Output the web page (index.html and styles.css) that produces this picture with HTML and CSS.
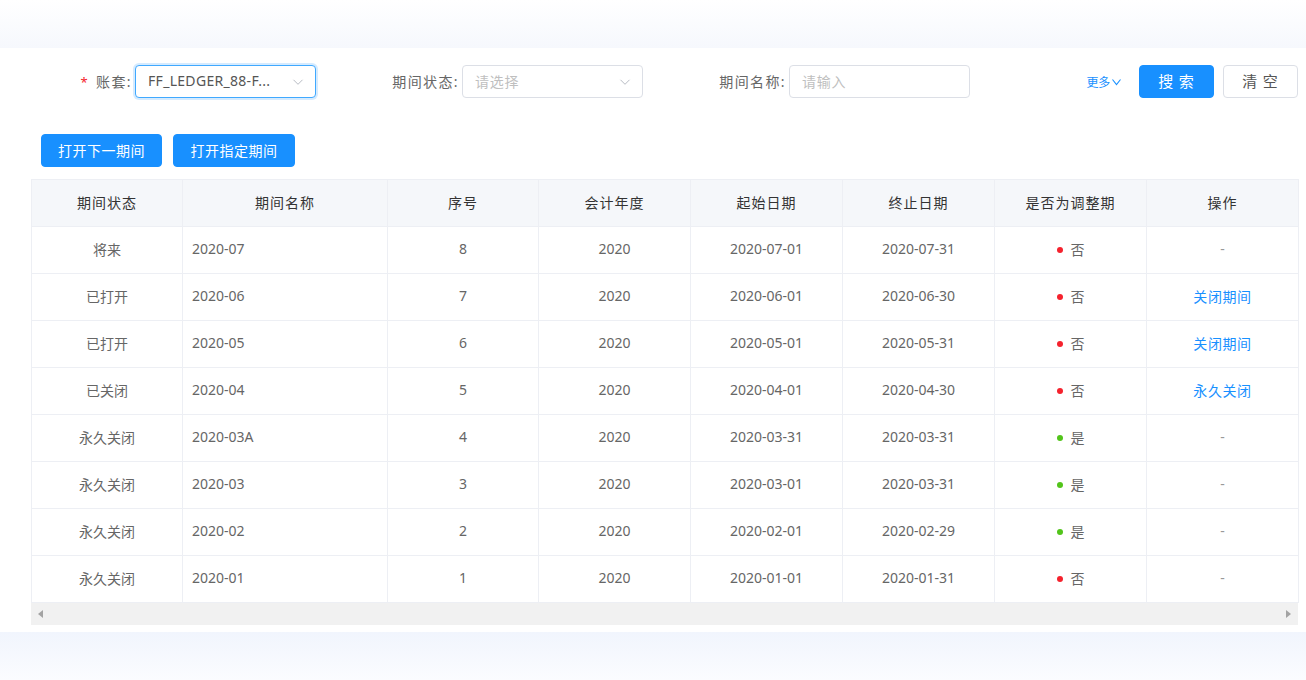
FILE: index.html
```html
<!DOCTYPE html>
<html lang="zh">
<head>
<meta charset="utf-8">
<title>期间管理</title>
<link rel="stylesheet" href="styles.css">
</head>
<body>
<div class="top-band"></div>
<div class="card">
  <div class="filter">
    <div class="item">
      <label class="lbl"><span class="req">*</span>账套:</label>
      <div class="control select focused"><span class="val">FF_LEDGER_88-F...</span>
        <svg class="arrow" viewBox="0 0 12 12"><path d="M1.5 3.8 L6 8.3 L10.5 3.8" fill="none" stroke="#b8bcc4" stroke-width="1"/></svg>
      </div>
    </div>
    <div class="item">
      <label class="lbl">期间状态:</label>
      <div class="control select"><span class="ph">请选择</span>
        <svg class="arrow" viewBox="0 0 12 12"><path d="M1.5 3.8 L6 8.3 L10.5 3.8" fill="none" stroke="#b8bcc4" stroke-width="1"/></svg>
      </div>
    </div>
    <div class="item">
      <label class="lbl">期间名称:</label>
      <div class="control"><span class="ph">请输入</span></div>
    </div>
    <div class="actions">
      <a class="more">更多<svg class="more-ic" viewBox="0 0 10 10"><path d="M1 2.5 L5 7.5 L9 2.5" fill="none" stroke="#1890ff" stroke-width="1.1"/></svg></a>
      <button class="btn primary wide">搜 索</button>
      <button class="btn plain wide">清 空</button>
    </div>
  </div>
  <div class="toolbar">
    <button class="btn primary">打开下一期间</button>
    <button class="btn primary">打开指定期间</button>
  </div>
  <div class="table-wrap">
    <table class="grid">
      <colgroup>
        <col style="width:151px"><col style="width:205px"><col style="width:151px"><col style="width:152px"><col style="width:152px"><col style="width:152px"><col style="width:152px"><col style="width:152px">
      </colgroup>
      <thead>
        <tr><th>期间状态</th><th>期间名称</th><th>序号</th><th>会计年度</th><th>起始日期</th><th>终止日期</th><th>是否为调整期</th><th>操作</th></tr>
      </thead>
      <tbody>
        <tr><td>将来</td><td class="left">2020-07</td><td>8</td><td>2020</td><td>2020-07-01</td><td>2020-07-31</td><td><span class="dot red"></span>否</td><td class="muted">-</td></tr>
        <tr><td>已打开</td><td class="left">2020-06</td><td>7</td><td>2020</td><td>2020-06-01</td><td>2020-06-30</td><td><span class="dot red"></span>否</td><td><a class="link">关闭期间</a></td></tr>
        <tr><td>已打开</td><td class="left">2020-05</td><td>6</td><td>2020</td><td>2020-05-01</td><td>2020-05-31</td><td><span class="dot red"></span>否</td><td><a class="link">关闭期间</a></td></tr>
        <tr><td>已关闭</td><td class="left">2020-04</td><td>5</td><td>2020</td><td>2020-04-01</td><td>2020-04-30</td><td><span class="dot red"></span>否</td><td><a class="link">永久关闭</a></td></tr>
        <tr><td>永久关闭</td><td class="left">2020-03A</td><td>4</td><td>2020</td><td>2020-03-31</td><td>2020-03-31</td><td><span class="dot green"></span>是</td><td class="muted">-</td></tr>
        <tr><td>永久关闭</td><td class="left">2020-03</td><td>3</td><td>2020</td><td>2020-03-01</td><td>2020-03-31</td><td><span class="dot green"></span>是</td><td class="muted">-</td></tr>
        <tr><td>永久关闭</td><td class="left">2020-02</td><td>2</td><td>2020</td><td>2020-02-01</td><td>2020-02-29</td><td><span class="dot green"></span>是</td><td class="muted">-</td></tr>
        <tr><td>永久关闭</td><td class="left">2020-01</td><td>1</td><td>2020</td><td>2020-01-01</td><td>2020-01-31</td><td><span class="dot red"></span>否</td><td class="muted">-</td></tr>
      </tbody>
    </table>
    <div class="hscroll">
      <span class="tri left-tri"></span>
      <span class="tri right-tri"></span>
    </div>
  </div>
</div>
<div class="bottom-band"></div>
</body>
</html>
```
FILE: styles.css
```css
* { box-sizing: border-box; }
html, body { margin: 0; padding: 0; }
body {
  width: 1306px;
  height: 680px;
  overflow: hidden;
  background: #ffffff;
  font-family: "Noto Sans", "Noto Sans CJK SC", sans-serif;
  font-size: 14px;
  color: #666;
}
.top-band {
  height: 48px;
  background: linear-gradient(180deg, #ffffff 0%, #f6f8fd 100%);
}
.bottom-band {
  height: 48px;
  background: linear-gradient(180deg, #f1f5fd 0%, #fbfcff 100%);
}
.card {
  height: 584px;
  background: #fff;
  padding-top: 17px;
}
.filter {
  display: flex;
  align-items: center;
  height: 33px;
  padding-right: 8px;
}
.item {
  display: flex;
  align-items: center;
  width: 327px;
  flex: none;
}
.lbl {
  width: 135px;
  text-align: right;
  padding-right: 3px;
  padding-bottom: 2px;
  color: #666;
  font-size: 14px;
  letter-spacing: 1.4px;
  white-space: nowrap;
}
.req { color: #f5222d; margin-right: 7px; font-size: 13px; }
.control {
  width: 181px;
  height: 33px;
  border: 1px solid #dcdfe6;
  border-radius: 4px;
  display: flex;
  align-items: center;
  padding: 0 12px 2px;
  position: relative;
  background: #fff;
}
.control.focused {
  border-color: #40a9ff;
  box-shadow: 0 0 0 2px rgba(24,144,255,0.18);
}
.val { color: #555; letter-spacing: 0.3px; }
.ph { color: #bfbfbf; letter-spacing: 0.8px; }
.arrow {
  position: absolute;
  right: 11px;
  top: 10px;
  width: 12px;
  height: 12px;
}
.actions {
  margin-left: auto;
  display: flex;
  align-items: center;
}
.more {
  color: #1890ff;
  font-size: 12px;
  display: flex;
  align-items: center;
  margin-right: 17px;
  letter-spacing: -0.3px;
}
.more-ic { width: 11px; height: 10px; margin-left: 1px; }
.btn {
  height: 33px;
  border-radius: 4px;
  font-family: "Noto Sans CJK SC", sans-serif;
  font-size: 14px;
  padding: 0 0 2px;
  border: 1px solid transparent;
  cursor: pointer;
}
.btn.wide { width: 75px; font-size: 15px; letter-spacing: 1px; }
.btn.primary { background: #1890ff; color: #fff; border-color: #1890ff; }
.btn.plain { background: #fff; color: #555; border-color: #dcdfe6; margin-left: 9px; }
.toolbar {
  display: flex;
  gap: 11px;
  padding-left: 41px;
  margin-top: 36px;
}
.toolbar .btn { width: 121px; letter-spacing: 0.5px; }
.toolbar .btn + .btn { width: 122px; }
.table-wrap {
  margin: 12px 8px 0 31px;
  width: 1267px;
}
.grid {
  border-collapse: collapse;
  table-layout: fixed;
  width: 1267px;
}
.grid th, .grid td {
  height: 47px;
  border: 1px solid #edeff4;
  text-align: center;
  padding: 0 9px 3px;
  font-weight: normal;
  white-space: nowrap;
}
.grid th {
  background: #f5f7fa;
  color: #333;
  letter-spacing: 1px;
}
.grid td { color: #666; }
.grid td.left { text-align: left; }
.grid td.muted { color: #999; }
.link { color: #1890ff; letter-spacing: 0.6px; }
.dot {
  display: inline-block;
  width: 6px;
  height: 6px;
  border-radius: 50%;
  margin-right: 8px;
  vertical-align: middle;
  position: relative;
  top: -1px;
}
.dot.red { background: #f5222d; }
.dot.green { background: #52c41a; }
.hscroll {
  height: 22px;
  background: #f1f1f1;
  display: flex;
  align-items: center;
  justify-content: space-between;
  padding: 0 7px;
}
.tri {
  width: 0; height: 0;
  border-top: 4.5px solid transparent;
  border-bottom: 4.5px solid transparent;
}
.left-tri { border-right: 5px solid #a3a3a3; }
.right-tri { border-left: 5px solid #a3a3a3; }
```
